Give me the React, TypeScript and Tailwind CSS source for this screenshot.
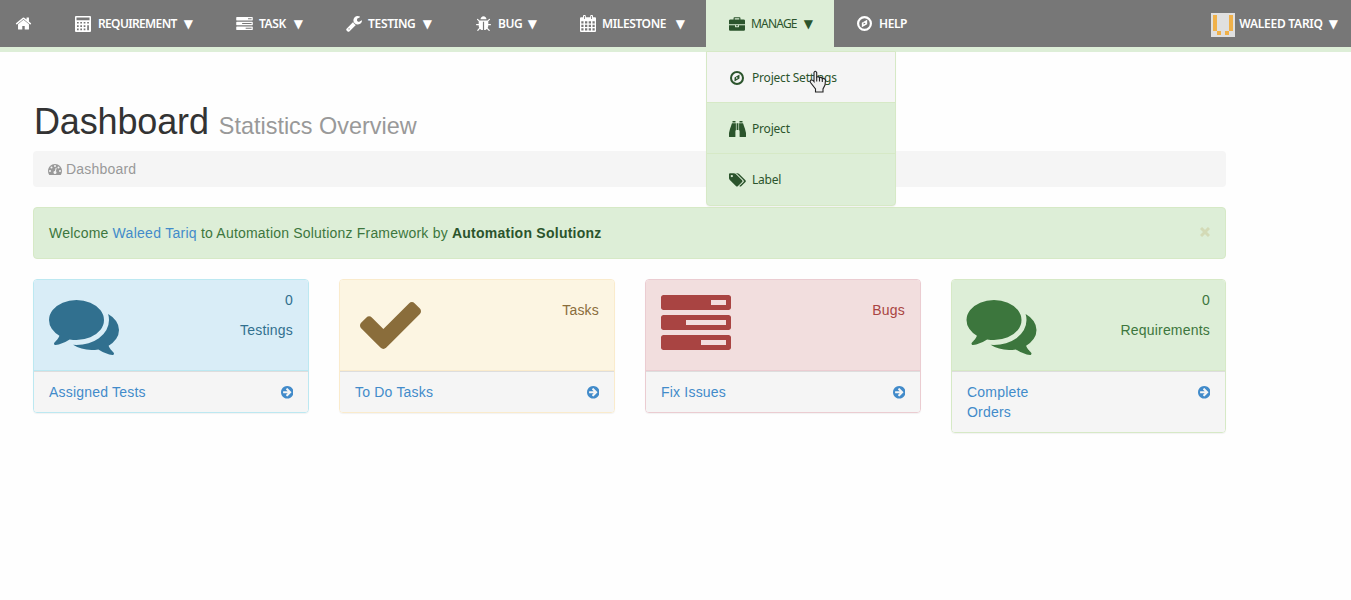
import type { ReactNode } from "react";

type IconProps = { className?: string };

const make = (viewBox: string, d: string) =>
  function Icon({ className }: IconProps) {
    return (
      <svg viewBox={viewBox} className={className} fill="currentColor" fillRule="evenodd" aria-hidden="true">
        <path d={d} />
      </svg>
    );
  };

const Home = make(
  "0 0 1792 1792",
  "M1472 992v480q0 26-19 45t-45 19h-384v-384h-256v384h-384q-26 0-45-19t-19-45v-480q0-1 .5-3t.5-3l575-474 575 474q1 2 1 6zm223-69l-62 74q-8 9-21 11h-3q-13 0-21-7l-692-577-692 577q-12 8-24 7-13-2-21-11l-62-74q-8-10-7-23.500t11-21.500l719-599q32-26 76-26t76 26l244 204v-195q0-14 9-23t23-9h192q14 0 23 9t9 23v408l219 182q10 8 11 21.500t-7 23.500z",
);
const Calculator = make(
  "0 0 16 16",
  "M1 0h14q1 0 1 1v14q0 1-1 1H1q-1 0-1-1V1q0-1 1-1zM1.500 1.500v2.800h13V1.500zM2 6v1.600h1.700V6zM5.300 6v1.600H7V6zM8.700 6v1.600h1.700V6zM12.200 6v1.600h1.700V6zM2 9.300v1.600h1.700V9.300zM5.300 9.300v1.600H7V9.300zM8.700 9.300v1.600h1.700V9.300zM2 12.600v1.600h1.700v-1.600zM5.300 12.600v1.600H7v-1.600zM8.700 12.600v1.600h1.700v-1.600zM12.200 9.300v4.900h1.700V9.300z",
);
const Tasks = make(
  "0 128 1792 1408",
  "M1024 1408h640v-128h-640v128zm-384-512h1024v-128h-1024v128zm640-512h384v-128h-384v128zm512 832v256q0 26-19 45t-45 19h-1664q-26 0-45-19t-19-45v-256q0-26 19-45t45-19h1664q26 0 45 19t19 45zm0-512v256q0 26-19 45t-45 19h-1664q-26 0-45-19t-19-45v-256q0-26 19-45t45-19h1664q26 0 45 19t19 45zm0-512v256q0 26-19 45t-45 19h-1664q-26 0-45-19t-19-45v-256q0-26 19-45t45-19h1664q26 0 45 19t19 45z",
);
const Wrench = make(
  "64 128 1664 1664",
  "M448 1472q0-26-19-45t-45-19-45 19-19 45 19 45 45 19 45-19 19-45zm644-420l-682 682q-37 37-90 37-52 0-91-37l-106-108q-38-36-38-90 0-53 38-91l681-681q39 98 114.500 173.500t173.500 114.500zm634-435q0 39-23 106-47 134-164.500 217.500t-258.500 83.500q-185 0-316.500-131.500t-131.500-316.500 131.500-316.500 316.500-131.500q58 0 121.500 16.500t107.500 46.500q16 11 16 28t-16 28l-293 169v224l193 107q5-3 79-48.500t135.500-81 70.500-35.500q15 0 23.500 10t8.500 25z",
);
const Bug = make(
  "96 32 1600 1600",
  "M1696 960q0 26-19 45t-45 19h-224q0 171-67 290l208 209q19 19 19 45t-19 45q-18 19-45 19t-45-19l-198-197q-5 5-15 13t-42 28.500-65 36.500-82 29-97 13v-896h-128v896q-51 0-101.500-13.500t-87-33-66-39-43.500-32.500l-15-14-183 207q-20 21-48 21-24 0-43-16-19-18-20.500-44.500t15.500-46.500l202-227q-58-114-58-274h-224q-26 0-45-19t-19-45 19-45 45-19h224v-294l-173-173q-19-19-19-45t19-45 45-19 45 19l173 173h844l173-173q19-19 45-19t45 19 19 45-19 45l-173 173v294h224q26 0 45 19t19 45zm-480-576h-640q0-133 93.500-226.500t226.500-93.500 226.500 93.500 93.500 226.500z",
);
const Calendar = make(
  "0 0 16 17",
  "M1 2.200h2V1q0-1 1-1h.8q1 0 1 1v1.200h4.400V1q0-1 1-1h.8q1 0 1 1v1.200h2q1 0 1 1V16q0 1-1 1H1q-1 0-1-1V3.200q0-1 1-1zM4 1v3h.8V1zM11.200 1v3h.8V1zM1.300 6.200v2.200h2.200V6.200zM5 6.200v2.200h2.300V6.200zM8.700 6.200v2.200H11V6.200zM12.500 6.200v2.200h2.200V6.200zM1.300 9.700v2.200h2.200V9.700zM5 9.700v2.200h2.300V9.700zM8.700 9.700v2.200H11V9.700zM12.500 9.700v2.200h2.200V9.700zM1.300 13.200v2.300h2.200v-2.300zM5 13.200v2.300h2.300v-2.300zM8.700 13.200v2.300H11v-2.300zM12.500 13.200v2.300h2.200v-2.300z",
);
const Briefcase = make(
  "0 0 1792 1536",
  "M640 256h512v-128h-512v128zm1152 640v480q0 66-47 113t-113 47h-1472q-66 0-113-47t-47-113v-480h672v160q0 26 19 45t45 19h320q26 0 45-19t19-45v-160h672zm-768 0v128h-256v-128h256zm768-480v384h-1792v-384q0-66 47-113t113-47h352v-160q0-40 28-68t68-28h576q40 0 68 28t28 68v160h352q66 0 113 47t47 113z",
);
const Compass = make(
  "128 128 1536 1536",
  "M800 1010l210-115-210-100zM1170 510v450l-548 320v-450zM896 352a544 544 0 1 0 0 1088a544 544 0 1 0 0-1088zM896 128a768 768 0 1 1 0 1536a768 768 0 1 1 0-1536z",
);
const Binoculars = make(
  "0 0 17 16",
  "M3.500 0h3v1.500h-3zM10.500 0h3v1.500h-3zM3 2.200h3.900v7.300H6.400V15.500q0 .5-.5.500H.6q-.6 0-.6-.6V12q.6-3.500 2.200-7.500Q2.600 3 3 2.200zM10.100 2.200H14q.4.8.8 2.300Q16.400 8.500 17 12v3.400q0 .6-.6.600h-5.300q-.5 0-.5-.5V9.500h-.5zM7.600 2.200h1.800v6.800H7.600z",
);
const Tags = make(
  "0 128 1920 1536",
  "M448 448q0-53-37.500-90.500t-90.500-37.500-90.500 37.500-37.500 90.500 37.500 90.500 90.500 37.500 90.500-37.500 37.500-90.500zm1067 576q0 53-37 90l-491 492q-39 37-91 37-53 0-90-37l-715-716q-38-37-64.500-101t-26.500-117v-416q0-52 38-90t90-38h416q53 0 117 26.500t102 64.500l715 714q37 39 37 91zm384 0q0 53-37 90l-491 492q-39 37-91 37-36 0-59-14t-53-45l470-470q37-37 37-90 0-52-37-91l-715-714q-38-38-102-64.500t-117-26.500h224q53 0 117 26.500t102 64.500l715 714q37 39 37 91z",
);
const Tachometer = make(
  "0 256 1792 1408",
  "M384 1152a128 128 0 1 0-256 0a128 128 0 1 0 256 0zM576 704a128 128 0 1 0-256 0a128 128 0 1 0 256 0zM1004 1185l101-382q6-26-7.500-48.500t-38.500-29.500-48 6.500-30 39.500l-101 382q-60 5-107 43.500t-63 98.500q-20 77 20 146t117 89 146-20 89-117q16-60-6-117t-72-91zM1664 1152a128 128 0 1 0-256 0a128 128 0 1 0 256 0zM1024 512a128 128 0 1 0-256 0a128 128 0 1 0 256 0zM1472 704a128 128 0 1 0-256 0a128 128 0 1 0 256 0zM1792 1152q0 261-141 483-19 29-54 29h-1402q-35 0-54-29-141-221-141-483 0-182 71-348t191-286 286-191 348-71 348 71 286 191 191 286 71 348z",
);
const Comments = make(
  "0 256 1792 1408",
  "M1408 768q0 139-94 257t-256.500 186.500-353.500 68.500q-86 0-176-16-124 88-278 128-36 9-86 16h-3q-11 0-20.500-8t-11.500-21q-1-3-1-6.500t.5-6.500 2-6l2.500-5 3.500-5.500 4-5 4.500-5 4-4.500q5-6 23-25t26-29.500 22.500-29 25-38.500 20.500-44q-124-72-195-177t-71-224q0-139 94-257t256.500-186.500 353.500-68.500 353.500 68.500 256.500 186.500 94 257zm384 256q0 120-71 224.500t-195 176.500q10 24 20.500 44t25 38.500 22.500 29 26 29.500 23 25q1 1 4 4.500t4.500 5 4 5 3.500 5.500l2.500 5 2 6 .5 6.500-1 6.500q-3 14-13 22t-22 7q-50-7-86-16-154-40-278-128-90 16-176 16-271 0-472-132 58 4 88 4 161 0 309-45t264-129q125-92 192-212t67-254q0-77-23-152 129 71 204 178t75 230z",
);
const Check = make(
  "121 334 1550 1188",
  "M1671 566q0 40-28 68l-724 724-136 136q-28 28-68 28t-68-28l-136-136-362-362q-28-28-28-68t28-68l136-136q28-28 68-28t68 28l294 295 656-657q28-28 68-28t68 28l136 136q28 28 28 68z",
);
const ArrowCircle = make(
  "128 128 1536 1536",
  "M1413 896q0-27-18-45l-91-91-362-362q-18-18-45-18t-45 18l-91 91q-18 18-18 45t18 45l189 189h-502q-26 0-45 19t-19 45v128q0 26 19 45t45 19h502l-189 189q-19 19-19 45t19 45l91 91q18 18 45 18t45-18l362-362 91-91q18-18 18-45zm251 0q0 209-103 385.500t-279.500 279.500-385.500 103-385.500-103-279.500-279.500-103-385.500 103-385.500 279.500-279.500 385.500-103 385.500 103 279.500 279.500 103 385.500z",
);

function Caret() {
  return <span className="font-['DejaVu_Sans',sans-serif] text-[12px] font-normal tracking-normal">▼</span>;
}

type NavProps = { icon: ReactNode; label: string; className: string; caret?: boolean; children?: ReactNode };

function NavItem({ icon, label, className, caret = true, children }: NavProps) {
  return (
    <li className={`relative flex h-full items-center justify-between pr-[21px] ${className}`}>
      <span className="flex items-center">
        {icon}
        <span>{label}</span>
      </span>
      {caret && <Caret />}
      {children}
    </li>
  );
}

function MenuRow({ icon, label, className = "" }: { icon: ReactNode; label: string; className?: string }) {
  return (
    <li className={`flex h-[51px] items-center border-b border-[#d6e9c6] pt-px pl-[22px] ${className}`}>
      <span className="flex w-[23px] items-center">{icon}</span>
      <span>{label}</span>
    </li>
  );
}

function Avatar() {
  return (
    <svg viewBox="0 0 24 24" className="mr-1 size-6" shapeRendering="crispEdges" aria-hidden="true">
      <path fill="#e0e0e0" d="M0 0h24v24H0z" />
      <path fill="#f0b14a" d="M2 2h4v16H2zM18 2h4v16h-4zM6 18h4v4H6zM14 18h4v4h-4z" />
    </svg>
  );
}

function Pointer() {
  return (
    <svg viewBox="0 0 18 23" className="absolute top-[18px] left-[102px] h-[23px] w-[18px]" aria-hidden="true">
      <path
        d="M5 2.500Q6 0 7.700 2.500V7q1.600-.8 2.800.6 1.600-.6 2.800.8 2.600-.2 3.200 1.600l-.5 5-2 4v3H6.500v-3L1.500 12.500q-1-2.500 1-2.500 1.500 0 2.500 1.500z"
        fill="#f0f0f0"
        stroke="#222"
        strokeWidth="1.100"
      />
      <path d="M7.700 7v4.500M10.500 7.600v4M13.300 8.500v3.500" stroke="#222" strokeWidth="1.100" />
    </svg>
  );
}

type CardProps = {
  icon: ReactNode;
  count?: string;
  title: string;
  link: string;
  border: string;
  head: string;
};

function Card({ icon, count, title, link, border, head }: CardProps) {
  return (
    <section className={`overflow-hidden rounded-[4px] border shadow-[0_1px_1px_rgba(0,0,0,0.05)] ${border}`}>
      <div className={`flex h-[91px] justify-between border-b px-[15px] ${head}`}>
        <div>{icon}</div>
        <div className="pt-[10px] text-right">
          {count !== undefined && <p className="mb-[10px]">{count}</p>}
          <p className={count === undefined ? "pt-[10px]" : ""}>{title}</p>
        </div>
      </div>
      <div className="flex justify-between border-t border-[#ddd] bg-[#f5f5f5] px-[15px] py-[10px] text-[#428bca]">
        <span className="w-[110px] whitespace-pre-line">{link}</span>
        <ArrowCircle className="mt-[4px] size-[12.500px]" />
      </div>
    </section>
  );
}

export default function App() {
  return (
    <div className="h-[600px] w-[1351px] overflow-hidden bg-[#fefefe] font-['Liberation_Sans',Arial,sans-serif] text-[14px] leading-5 tracking-[0.2px] text-[#333]">
      <header className="h-[52px] border-b-[5px] border-[#ddeed7] bg-[#777] font-['Noto_Sans',sans-serif] text-[12px] font-semibold tracking-[-0.4px] text-white">
        <nav className="flex h-[47px] justify-between">
          <ul className="flex h-full">
            <li className="flex h-full w-[53px] items-center pl-[15px]">
              <Home className="size-[17px]" />
            </li>
            <NavItem
              className="w-[161px] pl-[22px] tracking-[-0.65px]"
              icon={<Calculator className="mr-[7px] size-4" />}
              label="REQUIREMENT"
            />
            <NavItem className="w-[110px] pl-[22px]" icon={<Tasks className="mr-[6px] h-[13px] w-[17px]" />} label="TASK" />
            <NavItem
              className="w-[129px] pl-[22px] tracking-[-0.3px]"
              icon={<Wrench className="mr-[6px] size-4" />}
              label="TESTING"
            />
            <NavItem className="w-[105px] pl-[23px]" icon={<Bug className="mr-[7px] size-[15px]" />} label="BUG" />
            <NavItem className="w-[148px] pl-[22px]" icon={<Calendar className="mr-[6px] h-[17px] w-4" />} label="MILESTONE" />
            <NavItem
              className="w-[128px] bg-[#ddeed7] pl-[23px] font-normal tracking-[-0.8px] text-[#2b542c]"
              icon={<Briefcase className="mr-[6px] h-[14px] w-4" />}
              label="MANAGE"
            >
              <ul className="absolute top-[51px] left-0 z-10 h-[155px] w-[190px] rounded-b-[4px] border border-[#d6e9c6] bg-[#ddeed7] tracking-[-0.2px] shadow-[0_1px_1px_rgba(0,0,0,0.05)]">
                <MenuRow className="bg-[#f5f5f5]" icon={<Compass className="ml-px size-[14px]" />} label="Project Settings" />
                <MenuRow icon={<Binoculars className="h-4 w-[17px]" />} label="Project" />
                <MenuRow className="border-b-0" icon={<Tags className="h-[14px] w-[17px]" />} label="Label" />
                <li className="contents">
                  <Pointer />
                </li>
              </ul>
            </NavItem>
            <NavItem
              caret={false}
              className="w-[110px] pl-[23px]"
              icon={<Compass className="mr-[7px] size-[15px]" />}
              label="HELP"
            />
          </ul>
          <div className="flex h-full items-center pt-[2px] pr-[13px]">
            <Avatar />
            <span className="mr-[6px] -mt-[2px] tracking-[-0.25px]">WALEED TARIQ</span>
            <span className="-mt-[2px]">
              <Caret />
            </span>
          </div>
        </nav>
      </header>

      <main className="ml-[33px] w-[1193px] pt-[50px]">
        <h1 className="flex h-[39px] items-baseline pl-px text-[36px] leading-[39px] tracking-[-0.15px]">
          Dashboard
          <small className="ml-[10px] text-[23.4px] leading-none tracking-[0.02px] text-[#999]">Statistics Overview</small>
        </h1>
        <div className="mt-[10px] flex h-9 items-center rounded-[4px] bg-[#f5f5f5] pl-[15px] text-[#999]">
          <Tachometer className="mr-1 h-[11px] w-[14px]" />
          Dashboard
        </div>
        <div className="mt-5 flex h-[52px] items-center justify-between rounded-[4px] border border-[#d6e9c6] bg-[#ddeed7] px-[15px] text-[#3c763d]">
          <p className="whitespace-pre">
            Welcome <a className="tracking-[0.28px] text-[#428bca]">Waleed Tariq</a> to Automation Solutionz Framework
            by <b className="tracking-[0.25px] text-[#2b542c]">Automation Solutionz</b>
          </p>
          <svg viewBox="0 0 10 10" className="mb-[3px] size-[10px]" aria-hidden="true">
            <path d="M1 1l8 8M9 1l-8 8" stroke="#d3dab6" strokeWidth="3" />
          </svg>
        </div>
        <div className="mt-5 grid grid-cols-[276px_276px_276px_275px] items-start gap-[30px]">
          <Card
            icon={<Comments className="mt-[20px] h-[55px] w-[70px]" />}
            count="0"
            title="Testings"
            link="Assigned Tests"
            border="border-[#bce8f1]"
            head="border-[#bce8f1] bg-[#d9edf7] text-[#31708f]"
          />
          <Card
            icon={<Check className="mt-[22px] ml-[5px] h-[47px] w-[61px]" />}
            title="Tasks"
            link="To Do Tasks"
            border="border-[#faebcc]"
            head="border-[#faebcc] bg-[#fcf5e2] text-[#8a6d3b]"
          />
          <Card
            icon={<Tasks className="mt-[15px] h-[55px] w-[70px]" />}
            title="Bugs"
            link="Fix Issues"
            border="border-[#ebccd1]"
            head="border-[#ebccd1] bg-[#f2dede] text-[#a94442]"
          />
          <Card
            icon={<Comments className="mt-[20px] -ml-px h-[55px] w-[71px]" />}
            count="0"
            title="Requirements"
            link={"Complete\nOrders"}
            border="border-[#d6e9c6]"
            head="border-[#d6e9c6] bg-[#ddeed7] text-[#3c763d]"
          />
        </div>
      </main>
    </div>
  );
}
